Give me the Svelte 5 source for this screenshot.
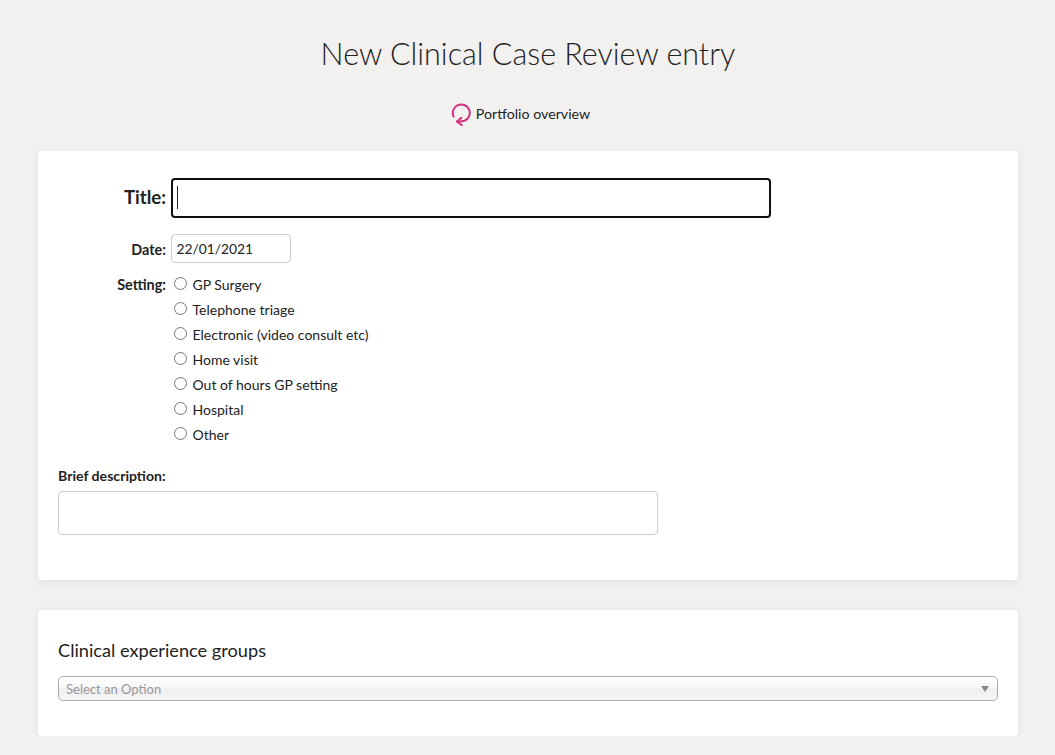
<script lang="ts">
	const settings = [
		'GP Surgery',
		'Telephone triage',
		'Electronic (video consult etc)',
		'Home visit',
		'Out of hours GP setting',
		'Hospital',
		'Other'
	];

	let title = $state('');
	let date = $state('22/01/2021');
	let description = $state('');
	let titleInput: HTMLInputElement;

	$effect(() => {
		titleInput.focus();
	});
</script>

<div class="page">
	<h1>New Clinical Case Review entry</h1>

	<div class="overview">
		<a href="#overview">
			<svg width="20" height="24" viewBox="0 0 20 24" fill="none" stroke="#d0307f" stroke-width="2" stroke-linecap="round" stroke-linejoin="round">
				<path d="M2.6 14.6A8.5 8.5 0 1 1 13.5 18.8Q10.5 19.8 6 19.4" />
				<path d="M10.4 15.8L6 19.4L10.8 23.2" />
			</svg>
			<span>Portfolio overview</span>
		</a>
	</div>

	<section class="card first">
		<div class="row title-row">
			<label for="title">Title:</label>
			<div class="title-field">
				<input id="title" type="text" bind:this={titleInput} bind:value={title} />
				<i class="caret"></i>
			</div>
		</div>

		<div class="row date-row">
			<label for="date">Date:</label>
			<input id="date" type="text" bind:value={date} />
		</div>

		<div class="row setting-row">
			<span class="label">Setting:</span>
			<div class="options">
				{#each settings as s}
					<label class="option">
						<input type="radio" name="setting" value={s} />
						<span>{s}</span>
					</label>
				{/each}
			</div>
		</div>

		<label class="desc-label" for="desc">Brief description:</label>
		<textarea id="desc" bind:value={description}></textarea>
	</section>

	<section class="card second">
		<h2>Clinical experience groups</h2>
		<div class="select">
			<span>Select an Option</span>
			<i class="arrow"></i>
		</div>
	</section>
</div>

<style>
	:global(body) {
		margin: 0;
		background: #f2f1f0;
		color: #222;
		font-family: Lato, "Liberation Sans", sans-serif;
		overflow: hidden;
	}

	.page {
		padding: 0 37px 0 38px;
	}

	h1 {
		margin: 0;
		padding-top: 33px;
		height: 42px;
		line-height: 40px;
		text-align: center;
		font-size: 30.5px;
		font-weight: 300;
		color: #222;
	}

	.overview {
		margin-top: 27px;
		height: 24px;
		display: flex;
		justify-content: center;
	}

	.overview a {
		display: flex;
		align-items: center;
		gap: 5px;
		margin-right: 15px;
		color: #222;
		text-decoration: none;
		font-size: 14.2px;
	}

	.overview span {
		padding-bottom: 2px;
	}

	.card {
		background: #fff;
		border-radius: 4px;
		box-shadow: 0 2px 8px rgba(0, 0, 0, 0.07);
		box-sizing: border-box;
	}

	.card.first {
		margin-top: 25px;
		height: 429px;
		padding: 27px 20px 0;
	}

	.card.second {
		margin-top: 30px;
		height: 126px;
		padding: 29px 20px 0;
	}

	.row {
		display: flex;
	}

	.row > label,
	.label {
		width: 108px;
		margin-right: 5px;
		text-align: right;
		font-weight: 700;
		font-size: 14.4px;
		flex-shrink: 0;
	}

	.title-row {
		align-items: center;
	}

	.title-row label {
		font-size: 18.6px;
		position: relative;
		top: -1px;
	}

	.title-field {
		position: relative;
	}

	#title {
		display: block;
		width: 600px;
		height: 40px;
		box-sizing: border-box;
		border: 1px solid #ccc;
		border-radius: 4px;
		padding: 0 5px;
		font: 16px Lato, sans-serif;
		background: #fff;
		caret-color: transparent;
	}

	#title:focus {
		outline: 2px solid #101010;
		outline-offset: -2px;
	}

	.caret {
		position: absolute;
		left: 6px;
		top: 8px;
		width: 1px;
		height: 23px;
		background: #222;
	}

	.date-row {
		margin-top: 16px;
		align-items: center;
	}

	.date-row label {
		padding-top: 2px;
	}

	#date {
		width: 120px;
		height: 29px;
		box-sizing: border-box;
		border: 1px solid #ccc;
		border-radius: 4px;
		padding: 0 4.5px;
		font: 13.8px Lato, sans-serif;
		color: #222;
	}

	.setting-row {
		margin-top: 9px;
	}

	.label {
		line-height: 26px;
	}

	.option {
		display: flex;
		align-items: center;
		height: 25px;
		font-size: 14px;
	}

	.option input {
		width: 13px;
		height: 13px;
		margin: 0 5.5px 3px 3px;
		flex-shrink: 0;
	}

	.desc-label {
		display: block;
		margin-top: 20px;
		font-weight: 700;
		font-size: 14.1px;
		line-height: 18px;
	}

	textarea {
		display: block;
		width: 600px;
		height: 44px;
		margin-top: 6px;
		box-sizing: border-box;
		border: 1px solid #ccc;
		border-radius: 4px;
		resize: none;
		background: #fff;
	}

	h2 {
		margin: 0;
		font-size: 18.2px;
		font-weight: 400;
		line-height: 22px;
		color: #222;
	}

	.select {
		margin-top: 15px;
		height: 25px;
		box-sizing: border-box;
		border: 1px solid #aaa;
		border-radius: 5px;
		padding: 0 8px 0 7px;
		display: flex;
		align-items: center;
		justify-content: space-between;
		font-size: 13px;
		color: #999;
		background: linear-gradient(#fff 0%, #f8f8f8 45%, #eeeeee 55%, #f7f7f7 100%);
	}

	.arrow {
		width: 0;
		height: 0;
		border-left: 4px solid transparent;
		border-right: 4px solid transparent;
		border-top: 6px solid #888;
	}
</style>
